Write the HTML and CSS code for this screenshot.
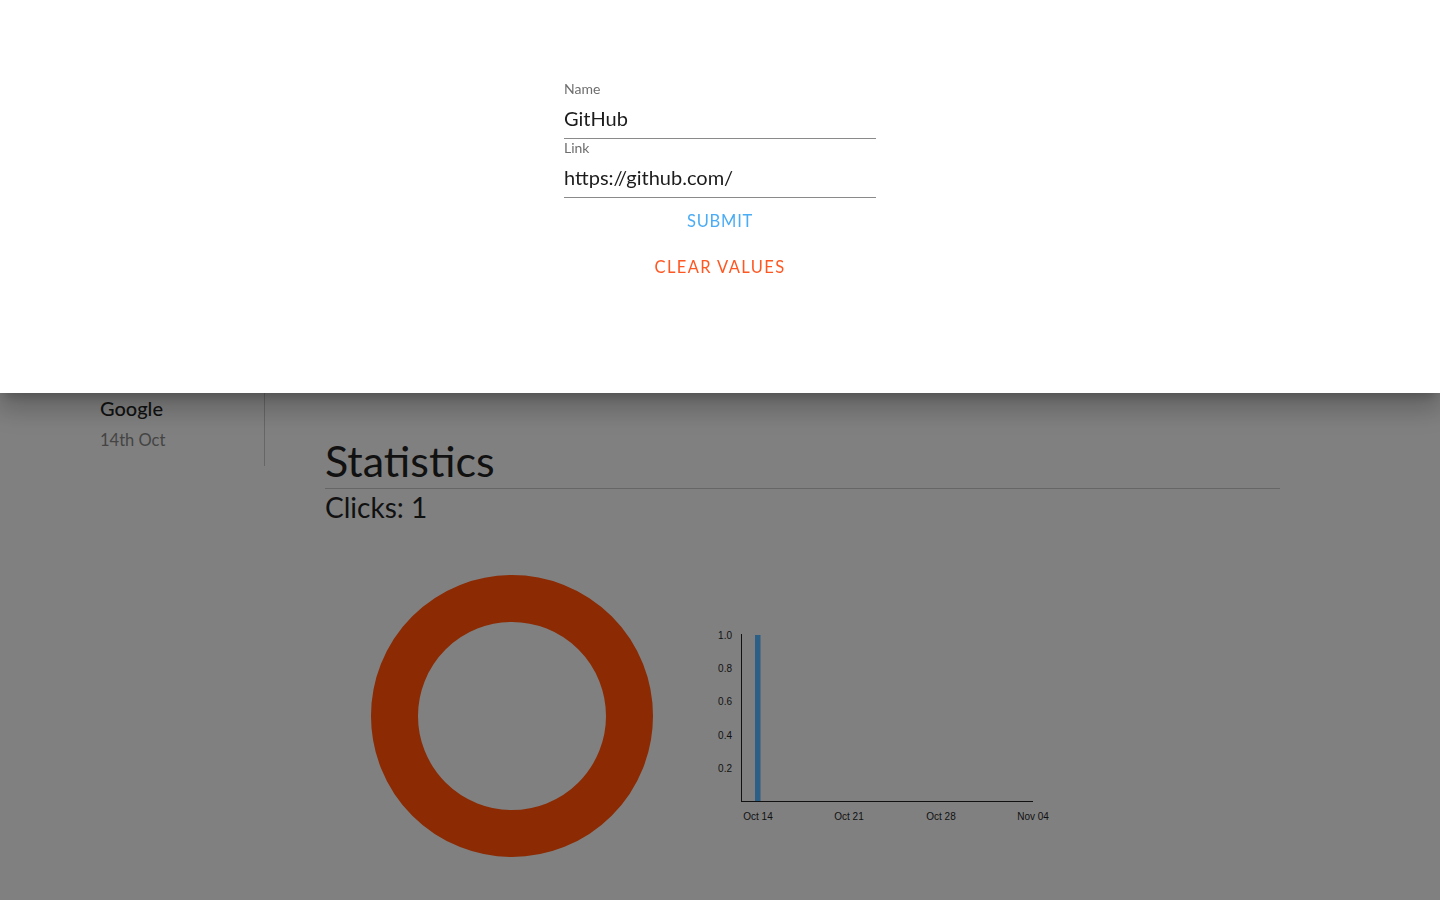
FILE: index.html
```html
<!DOCTYPE html>
<html lang="en">
<head>
<meta charset="utf-8">
<title>Links</title>
<link rel="stylesheet" href="styles.css">
</head>
<body>
<div class="page">
  <aside class="sidebar">
    <div class="link-item">
      <div class="link-name">Google</div>
      <div class="link-date">14th Oct</div>
    </div>
  </aside>
  <main class="main">
    <h1 class="stats-title">Statistics</h1>
    <h2 class="clicks">Clicks: 1</h2>
    <div class="charts">
      <div class="donut-box">
        <svg class="donut" width="312" height="312" viewBox="0 0 312 312">
          <circle cx="156" cy="156" r="117.5" fill="none" stroke="#8b2a03" stroke-width="47"/>
        </svg>
      </div>
      <svg class="bars" width="370" height="312" viewBox="0 0 370 312">
        <g class="ticks-y">
          <text x="33" y="79" text-anchor="end">1.0</text>
          <text x="33" y="112" text-anchor="end">0.8</text>
          <text x="33" y="145" text-anchor="end">0.6</text>
          <text x="33" y="179" text-anchor="end">0.4</text>
          <text x="33" y="212" text-anchor="end">0.2</text>
        </g>
        <rect x="56" y="75" width="5.5" height="166" fill="#2c5f86"/>
        <line x1="42.5" y1="74" x2="42.5" y2="241.5" stroke="#111" stroke-width="1"/>
        <line x1="42" y1="241.5" x2="334" y2="241.5" stroke="#111" stroke-width="1"/>
        <g class="ticks-x">
          <text x="59" y="260" text-anchor="middle">Oct 14</text>
          <text x="150" y="260" text-anchor="middle">Oct 21</text>
          <text x="242" y="260" text-anchor="middle">Oct 28</text>
          <text x="334" y="260" text-anchor="middle">Nov 04</text>
        </g>
      </svg>
    </div>
  </main>
</div>

<div class="drawer">
  <form class="link-form">
    <label class="field">
      <span class="field-label">Name</span>
      <input class="field-input" type="text" value="GitHub">
    </label>
    <label class="field">
      <span class="field-label">Link</span>
      <input class="field-input" type="text" value="https://github.com/">
    </label>
    <button type="button" class="btn btn-submit">Submit</button>
    <button type="button" class="btn btn-clear">Clear values</button>
  </form>
</div>
</body>
</html>
```

FILE: styles.css
```css
* { box-sizing: border-box; }

html, body {
  margin: 0;
  padding: 0;
  height: 100%;
}

body {
  background: #808080;
  font-family: Lato, "Open Sans", sans-serif;
  color: #111;
  overflow: hidden;
}

.page {
  display: flex;
  padding-top: 393px;
}

.sidebar {
  width: 265px;
  height: 73px;
  border-right: 1px solid #666;
  padding: 4px 0 0 100px;
  flex-shrink: 0;
}

.link-name {
  font-size: 20px;
  font-weight: 500;
  color: #111;
  line-height: 22px;
}

.link-date {
  margin-top: 11px;
  font-size: 16.5px;
  color: #444;
  line-height: 20px;
}

.main {
  margin-left: 60px;
  width: 955px;
  padding-top: 40px;
}

.stats-title {
  margin: 0;
  font-size: 43px;
  font-weight: 400;
  line-height: 55px;
  color: #111;
  border-bottom: 1px solid #666;
}

.clicks {
  margin: 0;
  font-size: 28px;
  font-weight: 400;
  line-height: 36px;
  color: #111;
}

.charts {
  display: flex;
  margin-top: 35px;
}

.donut-box {
  width: 374px;
  display: flex;
  justify-content: center;
}

.bars text {
  font-family: "Liberation Sans", sans-serif;
  font-size: 10px;
  fill: #111;
}

.drawer {
  position: fixed;
  top: 0;
  left: 0;
  right: 0;
  height: 393px;
  background: #fff;
  box-shadow: 0 8px 10px -5px rgba(0,0,0,0.2), 0 16px 24px 2px rgba(0,0,0,0.14), 0 6px 30px 5px rgba(0,0,0,0.12);
  display: flex;
  justify-content: center;
}

.link-form {
  width: 312px;
  padding-top: 80px;
  display: flex;
  flex-direction: column;
}

.field {
  display: flex;
  flex-direction: column;
}

.field-label {
  font-size: 14px;
  color: #6e6e6e;
  line-height: 18px;
}

.field-input {
  border: none;
  border-bottom: 1px solid #8a8a8a;
  font-family: inherit;
  font-size: 20px;
  color: #1c1c1c;
  padding: 8px 0 8px;
  outline: none;
  background: transparent;
  line-height: 24px;
}

.btn {
  align-self: center;
  border: none;
  background: transparent;
  font-family: inherit;
  font-size: 16.5px;
  letter-spacing: 1.4px;
  text-transform: uppercase;
  cursor: pointer;
  padding: 6px 8px;
}

.btn-submit {
  color: #4aacf5;
  margin-top: 7px;
  letter-spacing: 0.8px;
}

.btn-clear {
  color: #ff5722;
  margin-top: 14px;
}
```
